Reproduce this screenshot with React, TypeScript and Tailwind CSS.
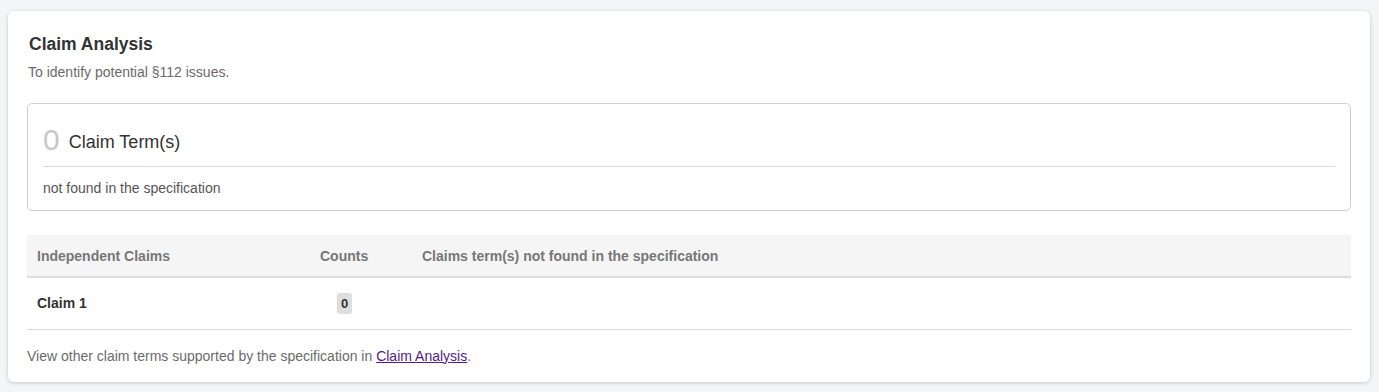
export default function App() {
  return (
    <div className="min-h-[392px] bg-[#f4f5f9] pt-[11px] pl-[8px] pr-[9px] pb-[10px] font-['Liberation_Sans',Arial,sans-serif]">
      <div className="h-[371px] rounded-[6px] bg-white px-[19px] pt-[23px] shadow-[0_1px_4px_rgba(0,0,0,0.18)]">
        <h2 className="pl-[2px] text-[17.5px] font-bold leading-[20px] text-[#333]">Claim Analysis</h2>
        <p className="mt-[9px] pl-[1px] text-[14px] leading-[18px] text-[#6b6b6b]">To identify potential §112 issues.</p>

        <div className="mt-[22px] h-[108px] rounded-[5px] border border-[#cfcfcf] px-[15px]">
          <div className="flex h-[63px] items-end gap-[9px] border-b border-[#dddddd] pb-[11px]">
            <span className="text-[30px] leading-[30px] text-[#c8c8c8]">0</span>
            <span className="pb-[2px] text-[18px] leading-[22px] text-[#333]">Claim Term(s)</span>
          </div>
          <p className="pt-[12px] text-[14px] leading-[18px] text-[#555]">not found in the specification</p>
        </div>

        <table className="mt-[24px] w-full border-collapse text-[14px]">
          <thead>
            <tr className="h-[42px] border-b-2 border-[#dddddd] bg-[#f5f5f5] text-left font-bold text-[#777]">
              <th className="w-[283px] px-[10px] pt-[1px]">Independent Claims</th>
              <th className="w-[102px] px-[10px] pt-[1px]">Counts</th>
              <th className="px-[10px] pt-[1px]">Claims term(s) not found in the specification</th>
            </tr>
          </thead>
          <tbody>
            <tr className="h-[52px] border-b border-[#dddddd]">
              <td className="px-[10px] font-bold text-[#333]">Claim 1</td>
              <td className="pl-[27px]">
                <span className="inline-block rounded-[3px] bg-[#dedede] px-[4px] text-[13px] font-bold leading-[21px] text-[#333]">0</span>
              </td>
              <td></td>
            </tr>
          </tbody>
        </table>

        <p className="mt-[17px] text-[14px] leading-[18px] text-[#6b6b6b]">
          View other claim terms supported by the specification in{" "}
          <a href="#" className="text-[#551a8b] underline">Claim Analysis</a>.
        </p>
      </div>
    </div>
  );
}
